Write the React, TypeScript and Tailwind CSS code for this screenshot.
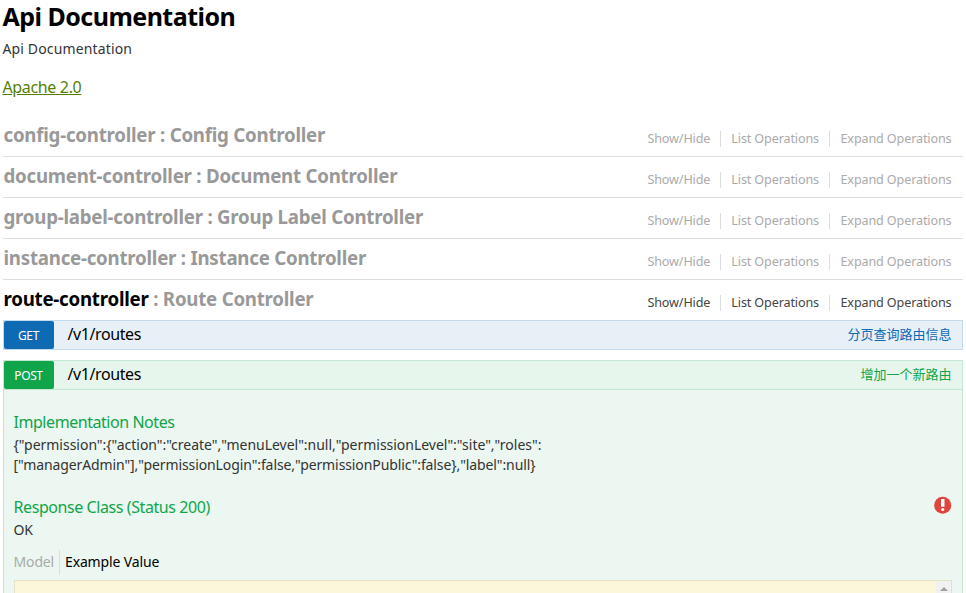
const controllers = [
  { name: 'config-controller', title: 'Config Controller', active: false },
  { name: 'document-controller', title: 'Document Controller', active: false },
  { name: 'group-label-controller', title: 'Group Label Controller', active: false },
  { name: 'instance-controller', title: 'Instance Controller', active: false },
  { name: 'route-controller', title: 'Route Controller', active: true },
];

function ControllerRow({ name, title, active }: { name: string; title: string; active: boolean }) {
  return (
    <div className={`flex justify-between pr-[11.5px] ${active ? 'h-10 text-black' : 'h-[41px] border-b border-[#ddd] text-[#999]'}`}>
      <h2 className="pl-[0.5px] text-[18.7px] font-bold leading-[38px] tracking-[-0.24px]">
        {name}
        <span className="text-[#999]"> : {title}</span>
      </h2>
      <div className={`flex h-10 items-center pt-[5px] text-[12.6px] leading-4 tracking-[-0.13px] ${active ? 'text-[#444]' : 'text-[#aaa]'}`}>
        <span className="border-r border-[#ddd] pr-[10px]">Show/Hide</span>
        <span className="border-r border-[#ddd] px-[10px]">List Operations</span>
        <span className="pl-[10.5px]">Expand Operations</span>
      </div>
    </div>
  );
}

export default function App() {
  return (
    <div className="h-[593px] w-[966px] overflow-hidden bg-white px-[3px] font-['Noto_Sans','Noto_Sans_CJK_SC',sans-serif] text-black">
      <h1 className="-ml-[0.5px] h-[36px] text-[25px] font-bold leading-[32px] tracking-[-0.53px]">Api Documentation</h1>
      <div className="-ml-[0.5px] h-[40px] text-[14px] leading-[26px] tracking-[0.14px] text-[#333]">Api Documentation</div>
      <div className="-ml-[0.5px] h-[40px] text-[16px] leading-[22px] tracking-[-0.35px] text-[#547f00] underline">Apache 2.0</div>
      {controllers.map((c) => (
        <ControllerRow key={c.name} {...c} />
      ))}
      <div className="mb-[10px] flex h-[30px] border border-[#c3d9ec] bg-[#e7f0f7]">
        <div className="w-[50px] rounded-[2px] bg-[#0f6ab4] pr-[1px] text-center text-[12px] leading-[30px] tracking-[-0.3px] text-white">GET</div>
        <div className="flex-1 pl-[13.5px] text-[16px] leading-[26px] tracking-[-0.4px]">/v1/routes</div>
        <div className="pr-[10.5px] text-[13px] leading-[26px] text-[#0f6ab4]">分页查询路由信息</div>
      </div>
      <div className="flex h-[30px] border border-[#c3e8d1] bg-[#e7f6ec]">
        <div className="w-[50px] rounded-[2px] bg-[#10a54a] pr-[1px] text-center text-[12px] leading-[30px] tracking-[-0.4px] text-white">POST</div>
        <div className="flex-1 pl-[13.5px] text-[16px] leading-[26px] tracking-[-0.4px]">/v1/routes</div>
        <div className="pr-[10.5px] text-[13px] leading-[26px] text-[#10a54a]">增加一个新路由</div>
      </div>
      <div className="h-[210px] border-x border-[#c3e8d1] bg-[#ebf7f0] px-[10px] pt-[20px]">
        <h4 className="-ml-[0.5px] h-[25px] text-[16px] leading-[25px] tracking-[-0.45px] text-[#10a54a]">Implementation Notes</h4>
        <p className="-ml-[0.5px] h-[60px] text-[14px] leading-[20px] tracking-[-0.02px] text-[#333]">
          {'{"permission":{"action":"create","menuLevel":null,"permissionLevel":"site","roles":'}
          <br />
          <span className="tracking-[-0.1px]">
            {'["managerAdmin"],"permissionLogin":false,"permissionPublic":false},"label":null}'}
          </span>
        </p>
        <div className="flex h-[25px] justify-between">
          <h4 className="-ml-[0.5px] text-[16px] leading-[25px] tracking-[-0.42px] text-[#10a54a]">Response Class (Status 200)</h4>
          <svg className="mt-px" width="18" height="18" viewBox="0 0 18 18">
            <circle cx="8.7" cy="9.3" r="8.5" fill="#e0453c" />
            <path d="M7 3h3.5v7.8H7z" fill="#fff" />
            <circle cx="8.7" cy="13.5" r="1.6" fill="#fff" />
          </svg>
        </div>
        <div className="-ml-[0.5px] h-[30px] text-[14px] leading-[20px] tracking-[-0.3px] text-[#333]">OK</div>
        <div className="-ml-[0.5px] flex h-[30px] text-[14px] leading-[24px] tracking-[-0.14px]">
          <span className="h-[25px] w-[46.5px] border-r border-[#ddd] text-[#aaa]">Model</span>
          <span className="pl-[5px]">Example Value</span>
        </div>
        <div className="flex h-[20px] justify-end border border-[#e5e0c6] bg-[#fcf6db]">
          <div className="flex w-[15px] justify-center bg-[#f1f1f1] pt-[6px]">
            <svg width="8" height="4" viewBox="0 0 8 4">
              <path d="M0 4L4 0l4 4z" fill="#a0a0a0" />
            </svg>
          </div>
        </div>
      </div>
    </div>
  );
}
